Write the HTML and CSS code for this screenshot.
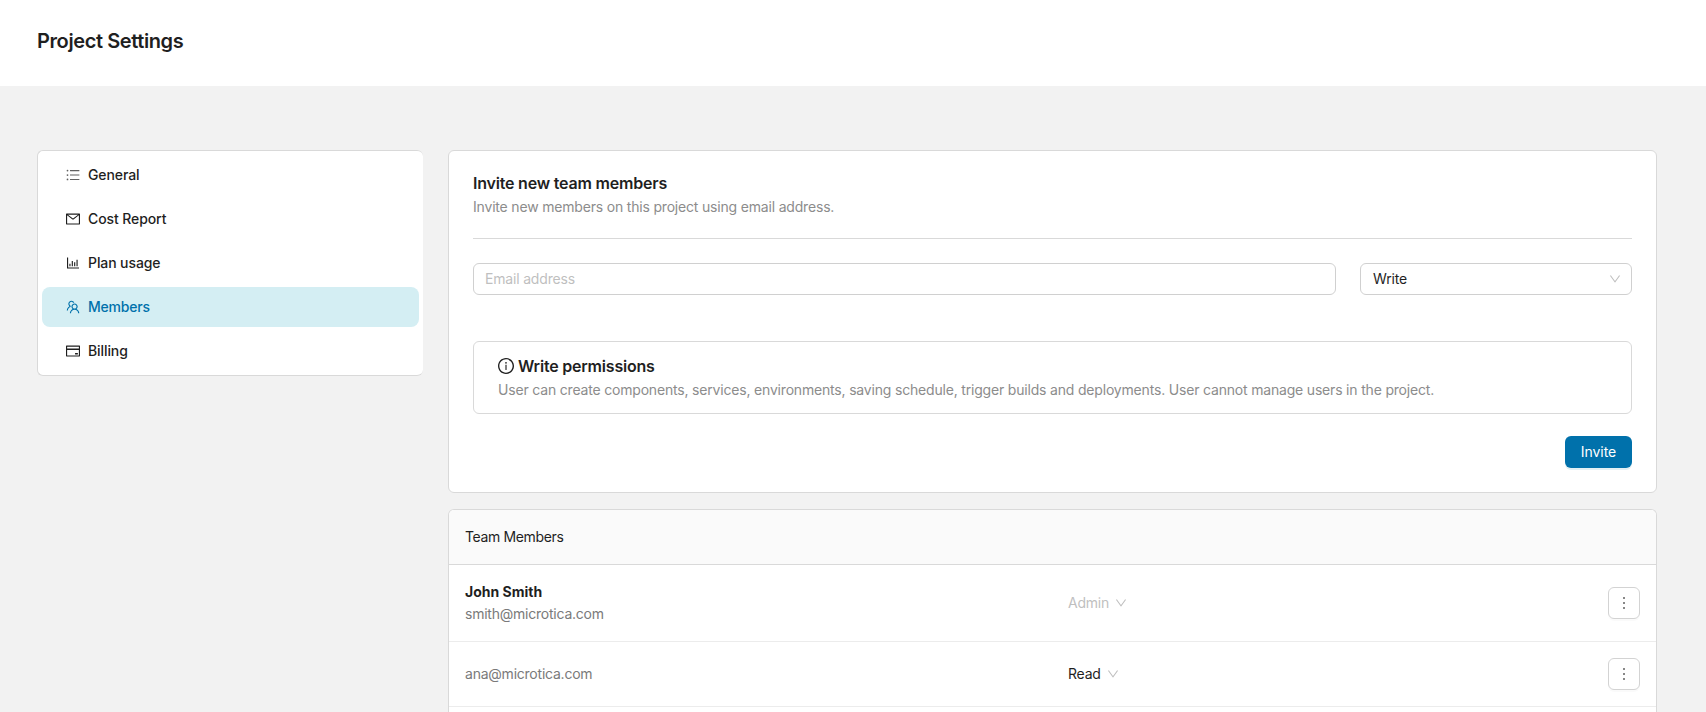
FILE: index.html
```
<!DOCTYPE html>
<html lang="en">
<head>
<meta charset="utf-8">
<title>Project Settings</title>
<link rel="stylesheet" href="styles.css">
</head>
<body>
<header class="page-header"><h1 class="page-title">Project Settings</h1></header>
<main class="content">
  <nav class="menu">
    <a class="menu-item">
      <svg class="icon icon-list" viewBox="64 64 896 896"><path d="M912 192H328c-4.400 0-8 3.600-8 8v56c0 4.400 3.600 8 8 8h584c4.400 0 8-3.600 8-8v-56c0-4.400-3.600-8-8-8zm0 284H328c-4.400 0-8 3.600-8 8v56c0 4.400 3.600 8 8 8h584c4.400 0 8-3.600 8-8v-56c0-4.400-3.600-8-8-8zm0 284H328c-4.400 0-8 3.600-8 8v56c0 4.400 3.600 8 8 8h584c4.400 0 8-3.600 8-8v-56c0-4.400-3.600-8-8-8zM104 228a56 56 0 10112 0 56 56 0 10-112 0zm0 284a56 56 0 10112 0 56 56 0 10-112 0zm0 284a56 56 0 10112 0 56 56 0 10-112 0z"/></svg>
      <span>General</span></a>
    <a class="menu-item">
      <svg class="icon" viewBox="64 64 896 896"><path d="M928 160H96c-17.700 0-32 14.300-32 32v640c0 17.700 14.300 32 32 32h832c17.700 0 32-14.300 32-32V192c0-17.700-14.300-32-32-32zm-40 110.800V792H136V270.800l-27.600-21.500 39.300-50.500 42.800 33.300h643.100l42.800-33.300 39.300 50.500-27.700 21.500zM833.600 232L512 482 190.400 232l-42.800-33.300-39.300 50.500 27.600 21.500 341.600 265.600a55.990 55.990 0 0068.700 0L888 270.800l27.600-21.500-39.300-50.500-42.700 33.200z"/></svg>
      <span>Cost Report</span></a>
    <a class="menu-item">
      <svg class="icon" viewBox="64 64 896 896"><path d="M888 792H200V168c0-4.400-3.600-8-8-8h-56c-4.400 0-8 3.600-8 8v688c0 4.400 3.600 8 8 8h752c4.400 0 8-3.600 8-8v-56c0-4.400-3.600-8-8-8zM280 712h72V552h-72zM432 712h72V384h-72zM584 712h72V462h-72zM736 712h72V304h-72z"/></svg>
      <span>Plan usage</span></a>
    <a class="menu-item menu-item-selected">
      <svg class="icon" viewBox="64 64 896 896"><path d="M824.200 699.900a301.550 301.550 0 00-86.400-60.400C783.100 602.800 812 546.800 812 484c0-110.800-92.400-201.700-203.200-200-109.100 1.700-197 90.600-197 200 0 62.800 29 118.800 74.200 155.500a300.950 300.950 0 00-86.400 60.400C345 754.600 314 826.800 312 903.800a8 8 0 008 8.200h56c4.300 0 7.900-3.400 8-7.700 1.900-58 25.400-112.300 66.700-153.500A226.620 226.620 0 01612 684c60.900 0 118.200 23.700 161.300 66.800C814.600 792 838 846.300 840 904.300c.1 4.300 3.700 7.700 8 7.700h56a8 8 0 008-8.200c-2-77-33-149.200-87.800-203.900zM612 612c-34.200 0-66.400-13.300-90.500-37.500a126.860 126.860 0 01-37.500-91.800c.3-32.800 13.400-64.500 36.300-88 24-24.600 56.100-38.300 90.400-38.700 33.900-.3 66.800 12.900 91 36.600 24.800 24.300 38.400 56.800 38.400 91.400 0 34.200-13.300 66.300-37.500 90.500A127.300 127.300 0 01612 612zM361.500 510.400c-.9-8.700-1.400-17.500-1.400-26.400 0-15.900 1.500-31.400 4.300-46.500.7-3.600-1.200-7.300-4.500-8.800-13.600-6.100-26.100-14.500-36.900-25.100a127.540 127.540 0 01-38.700-95.400c.9-32.100 13.800-62.600 36.300-85.600 24.700-25.300 57.900-39.100 93.200-38.700 31.900.3 62.700 12.600 86 34.400 7.900 7.400 14.700 15.600 20.400 24.400 2 3.100 5.900 4.400 9.300 3.200 17.600-6.100 36.200-10.400 55.300-12.400 5.600-.6 8.800-6.600 6.300-11.600-32.500-64.300-98.900-108.700-175.700-109.900-110.900-1.700-203.300 89.200-203.300 199.900 0 62.800 28.900 118.800 74.200 155.500-31.800 14.700-61.100 35-86.500 60.400-54.800 54.700-85.800 126.900-87.800 204a8 8 0 008 8.200h56.100c4.300 0 7.900-3.400 8-7.700 1.900-58 25.400-112.300 66.700-153.500 29.400-29.400 65.400-49.800 104.700-59.700 3.900-1 6.500-4.700 6-8.700z"/></svg>
      <span>Members</span></a>
    <a class="menu-item">
      <svg class="icon" viewBox="64 64 896 896"><path d="M928 160H96c-17.700 0-32 14.300-32 32v640c0 17.700 14.300 32 32 32h832c17.700 0 32-14.300 32-32V192c0-17.700-14.300-32-32-32zm-792 72h752v120H136V232zm752 560H136V440h752v352zm-237-64h165c4.400 0 8-3.600 8-8v-72c0-4.400-3.600-8-8-8H651c-4.400 0-8 3.600-8 8v72c0 4.400 3.600 8 8 8z"/></svg>
      <span>Billing</span></a>
  </nav>
  <div class="panels">
    <section class="card invite-card">
      <div class="invite-head">
        <h2 class="heading">Invite new team members</h2>
        <p class="description">Invite new members on this project using email address.</p>
      </div>
      <div class="invite-fields">
        <input class="email" type="text" placeholder="Email address">
        <div class="select"><span>Write</span><svg class="arrow" viewBox="64 64 896 896"><path d="M884 256h-75c-5.100 0-9.900 2.500-12.900 6.600L512 654.200 227.900 262.600c-3-4.100-7.800-6.600-12.900-6.600h-75c-6.500 0-10.300 7.400-6.500 12.700l352.600 486.100c12.800 17.600 39 17.600 51.700 0l352.600-486.100c3.900-5.300.1-12.700-6.400-12.700z"/></svg></div>
      </div>
      <div class="permissions">
        <h2 class="heading permissions-title"><svg class="info" viewBox="64 64 896 896"><path d="M512 64C264.600 64 64 264.600 64 512s200.600 448 448 448 448-200.600 448-448S759.400 64 512 64zm0 820c-205.400 0-372-166.600-372-372s166.600-372 372-372 372 166.600 372 372-166.600 372-372 372zM464 336a48 48 0 1096 0 48 48 0 10-96 0zm72 112h-48c-4.400 0-8 3.600-8 8v272c0 4.400 3.600 8 8 8h48c4.400 0 8-3.600 8-8V456c0-4.400-3.600-8-8-8z"/></svg><span>Write permissions</span></h2>
        <p class="description">User can create components, services, environments, saving schedule, trigger builds and deployments. User cannot manage users in the project.</p>
      </div>
      <div class="actions"><button class="primary">Invite</button></div>
    </section>
    <section class="card team-card">
      <div class="team-head">Team Members</div>
      <div class="row row-first">
        <div class="person"><strong class="name">John Smith</strong><span class="mail">smith@microtica.com</span></div>
        <div class="role role-disabled"><span>Admin</span><svg class="arrow" viewBox="64 64 896 896"><path d="M884 256h-75c-5.100 0-9.900 2.500-12.900 6.600L512 654.200 227.900 262.600c-3-4.100-7.800-6.600-12.900-6.600h-75c-6.500 0-10.300 7.400-6.500 12.700l352.600 486.100c12.800 17.600 39 17.600 51.700 0l352.600-486.100c3.900-5.300.1-12.700-6.400-12.700z"/></svg></div>
        <button class="more"><i></i><i></i><i></i></button>
      </div>
      <div class="row">
        <div class="person"><span class="mail">ana@microtica.com</span></div>
        <div class="role"><span>Read</span><svg class="arrow" viewBox="64 64 896 896"><path d="M884 256h-75c-5.100 0-9.900 2.500-12.900 6.600L512 654.200 227.900 262.600c-3-4.100-7.800-6.600-12.900-6.600h-75c-6.500 0-10.300 7.400-6.500 12.700l352.600 486.100c12.800 17.600 39 17.600 51.700 0l352.600-486.100c3.900-5.300.1-12.700-6.400-12.700z"/></svg></div>
        <button class="more"><i></i><i></i><i></i></button>
      </div>
    </section>
  </div>
</main>
</body>
</html>
```
FILE: styles.css
```
* { box-sizing: border-box; }
html { height: 100%; overflow: hidden; }
body {
  display: flex;
  flex-direction: column;
  height: 100%;
  margin: 0;
  overflow: hidden;
  background: #f2f2f2;
  color: #1f1f1f;
  font: 14px/22px Inter, "Liberation Sans", sans-serif;
  letter-spacing: -0.18px;
}
h1, h2, p { margin: 0; }
button, input { font: inherit; letter-spacing: inherit; }
svg { display: block; flex: none; fill: currentColor; }
.page-header { flex: none; height: 86px; padding: 25px 37px; background: #fff; }
.page-title { font-size: 20px; line-height: 32px; font-weight: 600; letter-spacing: -0.4px; }
.content {
  display: flex;
  align-items: stretch;
  flex: 1;
  min-height: 0;
  gap: 25px;
  padding: 64px 49px 0 37px;
}
.menu {
  display: flex;
  flex-direction: column;
  align-self: flex-start;
  gap: 4px;
  width: 386px;
  padding: 4px;
  background: #fff;
  border: 1px solid #d9d9d9;
  border-right: 0;
  border-radius: 6px;
}
.menu-item {
  display: flex;
  align-items: center;
  gap: 8px;
  height: 40px;
  padding-left: 24px;
  border-radius: 8px;
  font-weight: 450;
  letter-spacing: -0.1px;
}
.menu-item-selected { background: #d4eef3; color: #0071ab; letter-spacing: -0.2px; }
.icon { width: 14px; height: 14px; }
.icon-list { opacity: .7; }
.panels { flex: 1; display: flex; flex-direction: column; gap: 16px; min-height: 0; }
.card { background: #fff; border: 1px solid #d9d9d9; border-radius: 6px; }
.invite-card { flex: none; height: 343px; padding: 20px 24px 24px; }
.invite-head { height: 68px; border-bottom: 1px solid #d9d9d9; }
.heading { font-size: 16px; line-height: 24px; font-weight: 600; letter-spacing: -0.2px; }
.description { line-height: 24px; color: #8c8c8c; letter-spacing: -0.185px; }
.invite-fields { display: flex; gap: 24px; margin-top: 24px; }
.email, .select { height: 32px; border: 1px solid #d0d0d0; border-radius: 6px; background: #fff; }
.email { flex: 1; padding: 0 11px 2px; }
.email::placeholder { color: #bfbfbf; }
.select {
  display: flex;
  justify-content: space-between;
  align-items: center;
  width: 272px;
  padding: 0 10px 0 12px;
  letter-spacing: -0.18px;
}
.arrow { width: 12px; height: 12px; fill: #bfbfbf; }
.permissions { height: 73px; margin-top: 46px; padding: 12px 24px; border: 1px solid #d9d9d9; border-radius: 6px; }
.permissions-title { display: flex; align-items: center; gap: 4px; }
.info { width: 16px; height: 16px; }
.actions { display: flex; justify-content: flex-end; margin-top: 22px; }
.primary {
  width: 67px;
  height: 32px;
  padding: 0;
  border: 0;
  border-radius: 6px;
  background: #0071ab;
  box-shadow: 0 2px 0 #e2f0f4;
  color: #fff;
  letter-spacing: -0.05px;
}
.team-card { flex: 1; min-height: 0; border-bottom: 0; border-radius: 6px 6px 0 0; overflow: hidden; }
.team-head {
  height: 55px;
  padding: 16px;
  border-bottom: 1px solid #d9d9d9;
  background: #fafafa;
  letter-spacing: -0.36px;
}
.row {
  display: grid;
  grid-template-columns: 603px 1fr 32px;
  align-items: center;
  height: 65px;
  padding: 0 16px;
  border-bottom: 1px solid #ececec;
}
.row-first { height: 77px; }
.person { display: flex; flex-direction: column; }
.name { font-weight: 700; letter-spacing: 0; }
.mail { color: #7a7a7a; letter-spacing: -0.23px; }
.role { display: flex; align-items: center; gap: 6px; letter-spacing: -0.22px; }
.role-disabled { color: #bfbfbf; }
.more {
  display: flex;
  flex-direction: column;
  align-items: center;
  justify-content: center;
  gap: 3px;
  width: 32px;
  height: 32px;
  padding: 0;
  border: 1px solid #d3d3d3;
  border-radius: 6px;
  background: #fff;
  box-shadow: 0 2px 0 rgba(0, 0, 0, .02);
}
.more i { width: 2px; height: 2px; background: #888; }
```
